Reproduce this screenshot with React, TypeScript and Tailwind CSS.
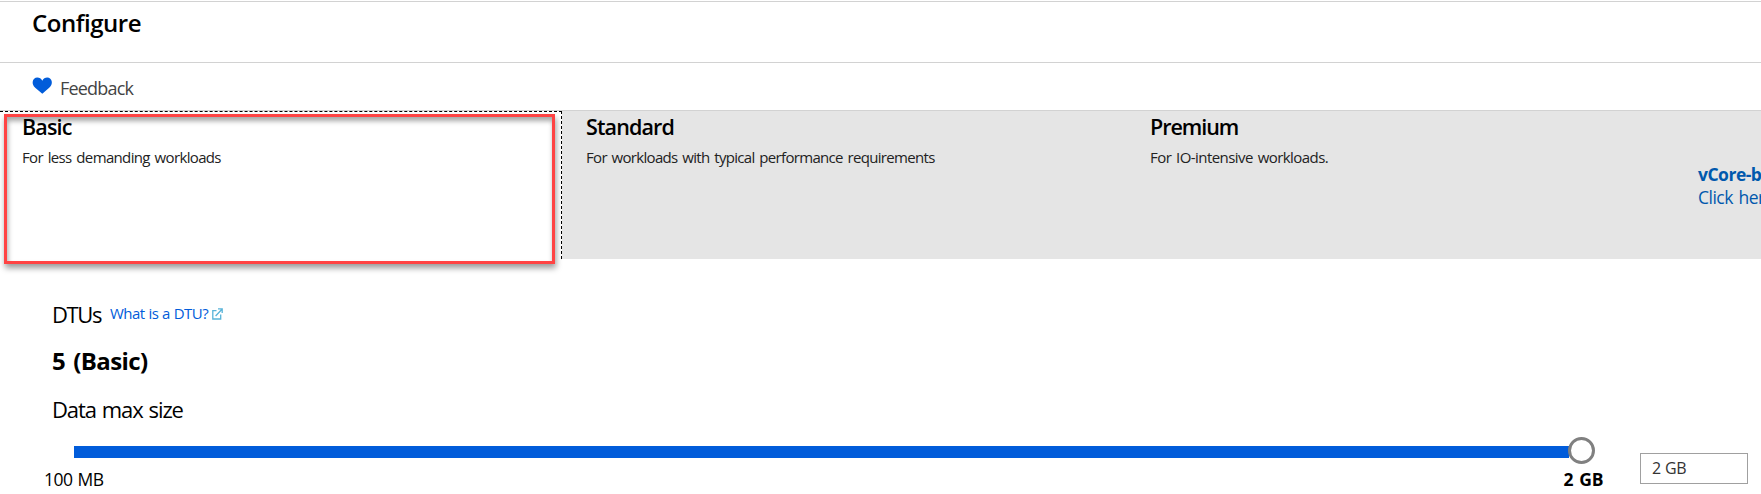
const tiers = [
  { name: 'Standard', text: 'For workloads with typical performance requirements', ns: 'tracking-[-0.88px]', ts: 'tracking-[-0.68px]' },
  { name: 'Premium', text: 'For IO-intensive workloads.', ns: 'tracking-[-1.05px]', ts: 'tracking-[-0.56px]' },
];

function Heart() {
  return (
    <svg width="20" height="17" viewBox="0 0 20 17" className="block">
      <path d="M10.300 16.700 3.200 10.800C.9 8.600.5 6.600.7 4.800 1 2.200 2.900.5 5.300.5 7.500.5 9.200 1.600 10.300 3.700 11.400 1.600 13.100.5 15.200.5 17.700.5 19.500 2.200 19.800 4.800 20 6.800 19.400 8.700 17.200 10.800Z" fill="#015cda" />
    </svg>
  );
}

function External() {
  return (
    <svg width="11" height="12" viewBox="0 0 11 12" className="block" fill="none" stroke="#59b4d9" strokeWidth="1.300">
      <path d="M4.500 2.700H.8V11H8.700V6.500" />
      <path d="M3.600 8 9.500 1.700M6 .9H10.200V5" />
    </svg>
  );
}

export default function App() {
  return (
    <div className="flex h-[494px] w-full flex-col overflow-hidden bg-white font-['Open_Sans',sans-serif] text-black">
      <header className="mt-px h-[62px] border-t border-b border-[#d2d2d2] pt-[6px] pl-8">
        <h1 className="text-[24px] leading-[30px] font-semibold tracking-[-0.47px]">Configure</h1>
      </header>
      <div className="flex h-12 shrink-0 items-start border-b border-[#d2d2d2] pl-8">
        <div className="pt-[14px]"><Heart /></div>
        <span className="ml-2 pt-3 text-[18px] leading-[26px] tracking-[-0.8px] text-[#444]">Feedback</span>
      </div>
      <div className="flex h-[148px] shrink-0 bg-[#e5e5e5]">
        <div className="relative w-[562px] shrink-0 border-t border-r border-dashed border-black bg-white pl-[22px]">
          <div className="pointer-events-none absolute top-[2px] left-1 h-[150px] w-[551px] border-3 border-[#ff4343] shadow-[1px_4px_6px_rgba(0,0,0,0.4),inset_1px_4px_5px_rgba(0,0,0,0.35)]" />
          <h2 className="relative text-[21.500px] leading-[30px] font-semibold tracking-[-0.85px]">Basic</h2>
          <p className="relative mt-px text-[15px] leading-[28px] tracking-[-0.65px] [word-spacing:1.500px] text-[#222]">For less demanding workloads</p>
        </div>
        {tiers.map((t) => (
          <div key={t.name} className="w-[564px] shrink-0 pt-px pl-6">
            <h2 className={'text-[21.500px] leading-[30px] font-semibold ' + t.ns}>{t.name}</h2>
            <p className={'mt-px text-[15px] leading-[28px] [word-spacing:1.500px] text-[#222] ' + t.ts}>{t.text}</p>
          </div>
        ))}
        <div className="w-[71px] overflow-hidden pt-[52px] pl-2 text-[17.500px] leading-[23px] whitespace-nowrap text-[#0058ad]">
          <div className="font-bold tracking-[-0.5px]">vCore-based</div>
          <div className="tracking-[-0.5px] [word-spacing:1.500px]">Click here</div>
        </div>
      </div>
      <main className="flex grow flex-col pl-[52px]">
        <div className="mt-[40px] flex h-[30px] items-start">
          <span className="text-[22px] leading-[30px] tracking-[-1.400px]">DTUs</span>
          <a className="ml-[9px] pt-px text-[15px] leading-[26px] tracking-[-0.55px] [word-spacing:0.500px] text-[#015cda]">What is a DTU?</a>
          <div className="ml-1 pt-[9px]"><External /></div>
        </div>
        <div className="mt-[17px] text-[24px] leading-[30px] font-bold tracking-[-0.6px] [word-spacing:2.500px]">5 (Basic)</div>
        <div className="mt-[18px] text-[22px] leading-[30px] tracking-[-1.130px] [word-spacing:1.500px]">Data max size</div>
        <div className="mt-[13px] -ml-2 flex">
          <div className="w-[1559px] shrink-0">
            <div className="ml-[30px] flex h-[27px] w-[1521px] items-center">
              <div className="mt-[2px] h-3 grow bg-[#015cda]" />
              <div className="-ml-px size-[27px] shrink-0 rounded-full border-3 border-[#808080] bg-white" />
            </div>
            <div className="mt-px flex justify-between text-[17.500px] leading-[28px]">
              <span className="tracking-[-0.5px] [word-spacing:1px]">100 MB</span>
              <span className="font-bold tracking-[-0.4px] [word-spacing:2px]">2 GB</span>
            </div>
          </div>
          <div className="mt-4 ml-[37px] h-[31px] w-[108px] border border-[#a0a0a0] pl-[11px] text-[16px] leading-[29px] tracking-[-0.6px] [word-spacing:1px] text-[#333]">2 GB</div>
        </div>
      </main>
    </div>
  );
}
